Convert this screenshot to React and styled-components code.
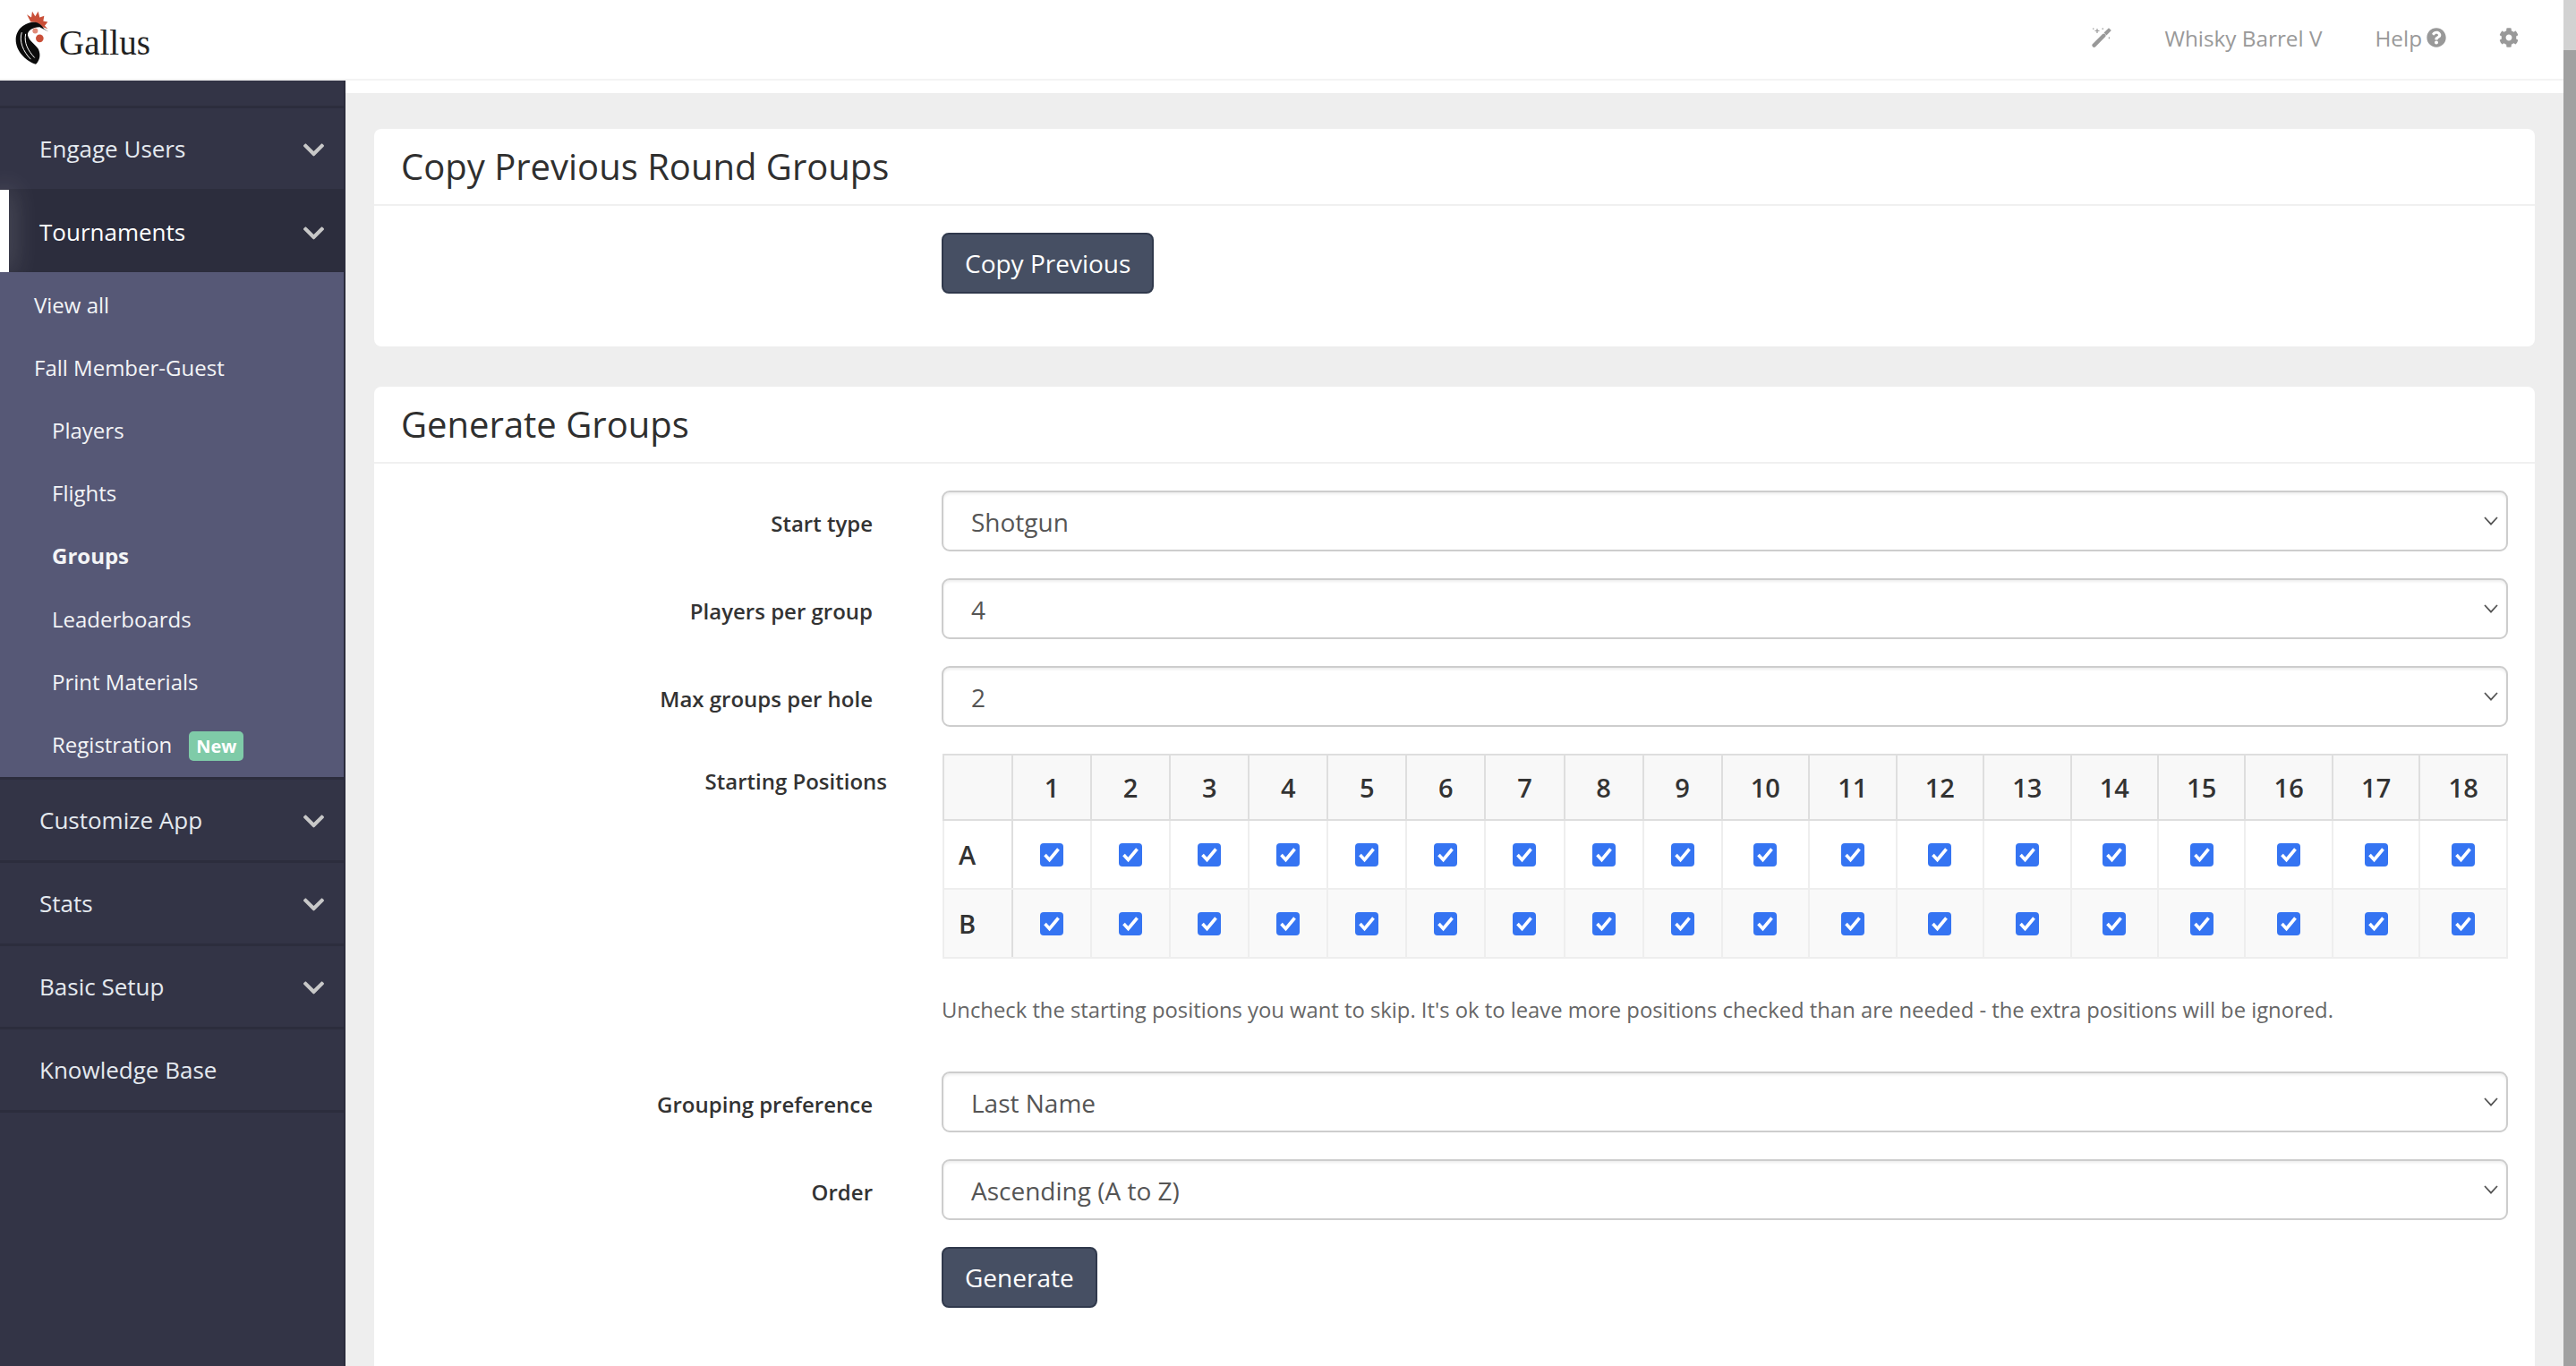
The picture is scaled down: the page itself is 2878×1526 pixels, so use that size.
import React from "react";
import styled, { createGlobalStyle } from "styled-components";
import { FaChevronDown, FaQuestionCircle, FaCog } from "react-icons/fa";

const chevron = "data:image/svg+xml,%3Csvg xmlns='http://www.w3.org/2000/svg' viewBox='0 0 16 10'%3E%3Cpath d='M1 1l7 7.6L15 1' fill='none' stroke='%23555' stroke-width='1.8'/%3E%3C/svg%3E";
const tick = "data:image/svg+xml,%3Csvg xmlns='http://www.w3.org/2000/svg' viewBox='0 0 26 26'%3E%3Cpath d='M5.5 13l5 5.5L20.5 6.5' fill='none' stroke='%23fff' stroke-width='3.6'/%3E%3C/svg%3E";

const Global = createGlobalStyle`
  html, body { margin: 0; padding: 0; height: 100%; overflow: hidden; }
  body { font-family: "Open Sans", "Liberation Sans", sans-serif; color: #333; background: #fff; }
  * { box-sizing: border-box; }
`;

const Screen = styled.div`
  display: flex;
  width: 2878px;
  height: 1526px;
  overflow: hidden;
`;
const Page = styled.div`
  flex: 1;
  min-width: 0;
  display: flex;
  flex-direction: column;
`;
const Scrollbar = styled.div`
  width: 14px;
  flex: none;
  background: #d2d2d2;
  padding-top: 56px;
`;
const ScrollThumb = styled.div`
  height: 100%;
  background: #a1a1a1;
`;

const Header = styled.header`
  height: 90px;
  flex: none;
  display: flex;
  align-items: center;
  border-bottom: 2px solid #f3f3f3;
  background: #fff;
  padding: 0 50px 4px 16px;
`;
const Logo = styled.div`
  display: flex;
  align-items: center;
  gap: 10px;
  margin-right: auto;
`;
const LogoText = styled.span`
  font-family: "Liberation Serif", serif;
  font-size: 39px;
  line-height: 1;
  color: #222;
  margin-top: 10px;
`;
const TopItem = styled.span`
  display: flex;
  align-items: center;
  gap: 5px;
  font-size: 24.3px;
  color: #999;
  margin-left: ${(p) => p.$gap}px;
  svg { width: 22px; height: 22px; }
`;

const Body = styled.div`
  flex: 1;
  min-height: 0;
  display: flex;
`;
const Sidebar = styled.nav`
  width: 386px;
  flex: none;
  background: #333446;
  border-right: 2px solid #2b2c3c;
  padding-top: 28px;
`;
const NavRow = styled.div`
  position: relative;
  height: 93px;
  display: flex;
  align-items: center;
  justify-content: space-between;
  padding: 0 20px 0 44px;
  font-size: 26px;
  color: ${(p) => (p.$active ? "#fff" : "#e4e9ef")};
  background: ${(p) => (p.$active ? "#2c2d3d" : "transparent")};
  border-top: 3px solid #2c2d3d;
  ${(p) => p.$active && `
    &::before {
      content: "";
      position: absolute;
      left: 0; top: -2px; bottom: 0;
      width: 10px;
      background: #fff;
      box-shadow: 0 0 30px rgba(255,255,255,.35);
    }
  `}
  svg { width: 27px; height: 27px; color: #c8c8c8; margin-top: 3px; }
`;
const SubMenu = styled.div`
  position: relative;
  background: #565876;
  padding: 1px 0 1px;
`;
const SubItem = styled.div`
  height: 70.2px;
  display: flex;
  align-items: center;
  padding-left: ${(p) => (p.$deep ? 58 : 38)}px;
  font-size: 24px;
  color: #f3f4f6;
  font-weight: ${(p) => (p.$bold ? 700 : 400)};
`;
const Badge = styled.span`
  margin-left: 19px;
  margin-top: 4px;
  width: 61px;
  height: 33px;
  border-radius: 5px;
  background: #7fcba8;
  color: #fff;
  font-size: 20px;
  font-weight: 700;
  display: flex;
  align-items: center;
  justify-content: center;
`;

const Main = styled.main`
  flex: 1;
  min-width: 0;
  overflow: hidden;
  background: linear-gradient(#fff 14px, #eee 14px);
  padding: 54px 32px 0;
`;
const Card = styled.section`
  background: #fff;
  border-radius: 8px 8px 0 0;
  margin-bottom: 45px;
  ${(p) => p.$h && `height: ${p.$h}px; border-radius: 8px;`}
`;
const CardHead = styled.h2`
  margin: 0;
  height: 86px;
  padding: 0 30px 2px;
  display: flex;
  align-items: center;
  font-size: 40px;
  font-weight: 400;
  color: #2f2f2f;
  border-bottom: 2px solid #f0f0f0;
`;
const CardBody = styled.div`
  padding: 30px 30px 140px 0;
  display: flex;
  flex-direction: column;
  gap: 30px;
`;
const Field = styled.div`
  display: grid;
  grid-template-columns: 634px 1fr;
  align-items: ${(p) => (p.$top ? "start" : "center")};
`;
const Label = styled.label`
  text-align: right;
  font-size: 24px;
  font-weight: 600;
  color: #333;
  padding-right: ${(p) => (p.$wide ? 61 : 77)}px;
  padding-top: ${(p) => p.$pt || 4}px;
`;
const Select = styled.select`
  appearance: none;
  width: 100%;
  height: 68px;
  border: 2.5px solid #cdcdcd;
  border-radius: 9px;
  padding: 2px 50px 0 31px;
  font: 400 28px "Open Sans", sans-serif;
  color: #555;
  background: #fff url("${chevron}") no-repeat right 9px center / 16px 10px;
  box-shadow: inset 0 2px 3px rgba(0,0,0,.07);
`;
const Button = styled.button`
  height: 68px;
  padding: 0 24px;
  border: 2px solid #30394c;
  border-radius: 8px;
  background: #464f63;
  color: #fff;
  font: 400 28px "Open Sans", sans-serif;
  justify-self: start;
`;
const Table = styled.table`
  width: 1749px;
  margin-left: 1px;
  table-layout: fixed;
  border-collapse: collapse;
  border: 2px solid #dedede;
  border-bottom-color: #e8e8e8;
`;
const Th = styled.th`
  width: ${(p) => p.$w}px;
  height: 73px;
  background: #f8f8f8;
  border: 2px solid #dedede;
  font-size: 29px;
  font-weight: 600;
  color: #333;
  text-align: center;
  padding: 0;
`;
const Tr = styled.tr`
  background: ${(p) => (p.$odd ? "#f9f9f9" : "#fff")};
`;
const RowHead = styled.th`
  height: 77px;
  border: 2px solid #eee;
  border-right-color: #dedede;
  text-align: left;
  padding: 0 0 0 16px;
  font-size: 29px;
  font-weight: 600;
  color: #333;
`;
const Td = styled.td`
  height: 77px;
  border: 2px solid #eee;
  text-align: center;
  padding: 0;
  line-height: 0;
`;
const Check = styled.input`
  appearance: none;
  width: 26px;
  height: 26px;
  margin: 0;
  border-radius: 4px;
  background: #3574f2 url("${tick}") center / 100% 100% no-repeat;
  vertical-align: middle;
`;
const Help = styled.p`
  margin: 37px 0 0;
  height: 59px;
  font-size: 23.8px;
  line-height: 40px;
  color: #666;
`;
const Logomark = () => (
  <svg width="40" height="62" viewBox="50 55 120 185" aria-label="Gallus logo">
    <path fill="#c94f38" d="M105 95L92 70l15 10 3-20 10 16 10-16 5 20 15-5-3 17 15 3-10 13 10 10-17-6c-10-12-25-18-40-17z" />
    <path fill="#0b0b0b" d="M118 96C85 96 55 120 55 155c0 35 30 70 67 82 13-12 18-32 8-52-10-15-30-25-35-45-2-15 15-28 40-28l30 16-15-10c-10-13-20-22-32-22z" />
    <path fill="none" stroke="#fff" strokeWidth="3" d="M75 130c-10 30 5 65 30 90M88 135c-6 30 7 55 30 80" />
    <circle cx="135" cy="150" r="13" fill="#c94f38" />
    <circle cx="120" cy="125" r="9" fill="#e08a78" />
  </svg>
);
const Wand = () => (
  <svg viewBox="0 0 22 22" aria-label="Magic">
    <path d="M2.6 19.6L13.4 8.8" stroke="currentColor" strokeWidth="4.4" strokeLinecap="round" fill="none" />
    <path d="M15 7l5.4-5.4" stroke="currentColor" strokeWidth="4" fill="none" />
    <path d="M6 1v5M3.5 3.5h5M1 1.2h1.4M11.5 1.2h1.6M19.4 10.5v1.8" stroke="currentColor" strokeWidth="1.2" fill="none" />
  </svg>
);

const holes = Array.from({ length: 18 }, (_, i) => i + 1);
const subs = [
  ["View all"], ["Fall Member-Guest"], ["Players", 1], ["Flights", 1], ["Groups", 1, 1],
  ["Leaderboards", 1], ["Print Materials", 1],
];

const PosRow = ({ name, odd }) => (
  <Tr $odd={odd}>
    <RowHead>{name}</RowHead>
    {holes.map((h) => (
      <Td key={h}><Check type="checkbox" defaultChecked aria-label={`${name}${h}`} /></Td>
    ))}
  </Tr>
);

export default function App() {
  return (
    <Screen>
      <Global />
      <Page>
        <Header>
          <Logo><Logomark /><LogoText>Gallus</LogoText></Logo>
          <TopItem><Wand /></TopItem>
          <TopItem $gap={60}>Whisky Barrel V</TopItem>
          <TopItem $gap={59}>Help <FaQuestionCircle /></TopItem>
          <TopItem $gap={59}><FaCog /></TopItem>
        </Header>
        <Body>
          <Sidebar>
            <NavRow>Engage Users <FaChevronDown /></NavRow>
            <NavRow $active>Tournaments <FaChevronDown /></NavRow>
            <SubMenu>
              {subs.map(([t, deep, bold]) => (
                <SubItem key={t} $deep={deep} $bold={bold}>{t}</SubItem>
              ))}
              <SubItem $deep>Registration<Badge>New</Badge></SubItem>
            </SubMenu>
            <NavRow>Customize App <FaChevronDown /></NavRow>
            <NavRow>Stats <FaChevronDown /></NavRow>
            <NavRow>Basic Setup <FaChevronDown /></NavRow>
            <NavRow>Knowledge Base</NavRow>
            <NavRow />
          </Sidebar>
          <Main>
            <Card $h={243}>
              <CardHead>Copy Previous Round Groups</CardHead>
              <CardBody>
                <Field>
                  <span />
                  <Button>Copy Previous</Button>
                </Field>
              </CardBody>
            </Card>
            <Card>
              <CardHead>Generate Groups</CardHead>
              <CardBody>
                <Field>
                  <Label>Start type</Label>
                  <Select defaultValue="Shotgun"><option>Shotgun</option></Select>
                </Field>
                <Field>
                  <Label>Players per group</Label>
                  <Select defaultValue="4"><option>4</option></Select>
                </Field>
                <Field>
                  <Label>Max groups per hole</Label>
                  <Select defaultValue="2"><option>2</option></Select>
                </Field>
                <Field $top>
                  <Label $wide $pt={14}>Starting Positions</Label>
                  <div>
                    <Table>
                      <thead>
                        <tr>
                          <Th $w={77} />
                          {holes.map((h) => <Th key={h} $w={h < 10 ? 88 : 97.4}>{h}</Th>)}
                        </tr>
                      </thead>
                      <tbody>
                        <PosRow name="A" />
                        <PosRow name="B" odd />
                      </tbody>
                    </Table>
                    <Help>Uncheck the starting positions you want to skip. It's ok to leave more positions checked than are needed - the extra positions will be ignored.</Help>
                  </div>
                </Field>
                <Field>
                  <Label>Grouping preference</Label>
                  <Select defaultValue="Last Name"><option>Last Name</option></Select>
                </Field>
                <Field>
                  <Label>Order</Label>
                  <Select defaultValue="Ascending (A to Z)"><option>Ascending (A to Z)</option></Select>
                </Field>
                <Field>
                  <span />
                  <Button>Generate</Button>
                </Field>
              </CardBody>
            </Card>
          </Main>
        </Body>
      </Page>
      <Scrollbar><ScrollThumb /></Scrollbar>
    </Screen>
  );
}
